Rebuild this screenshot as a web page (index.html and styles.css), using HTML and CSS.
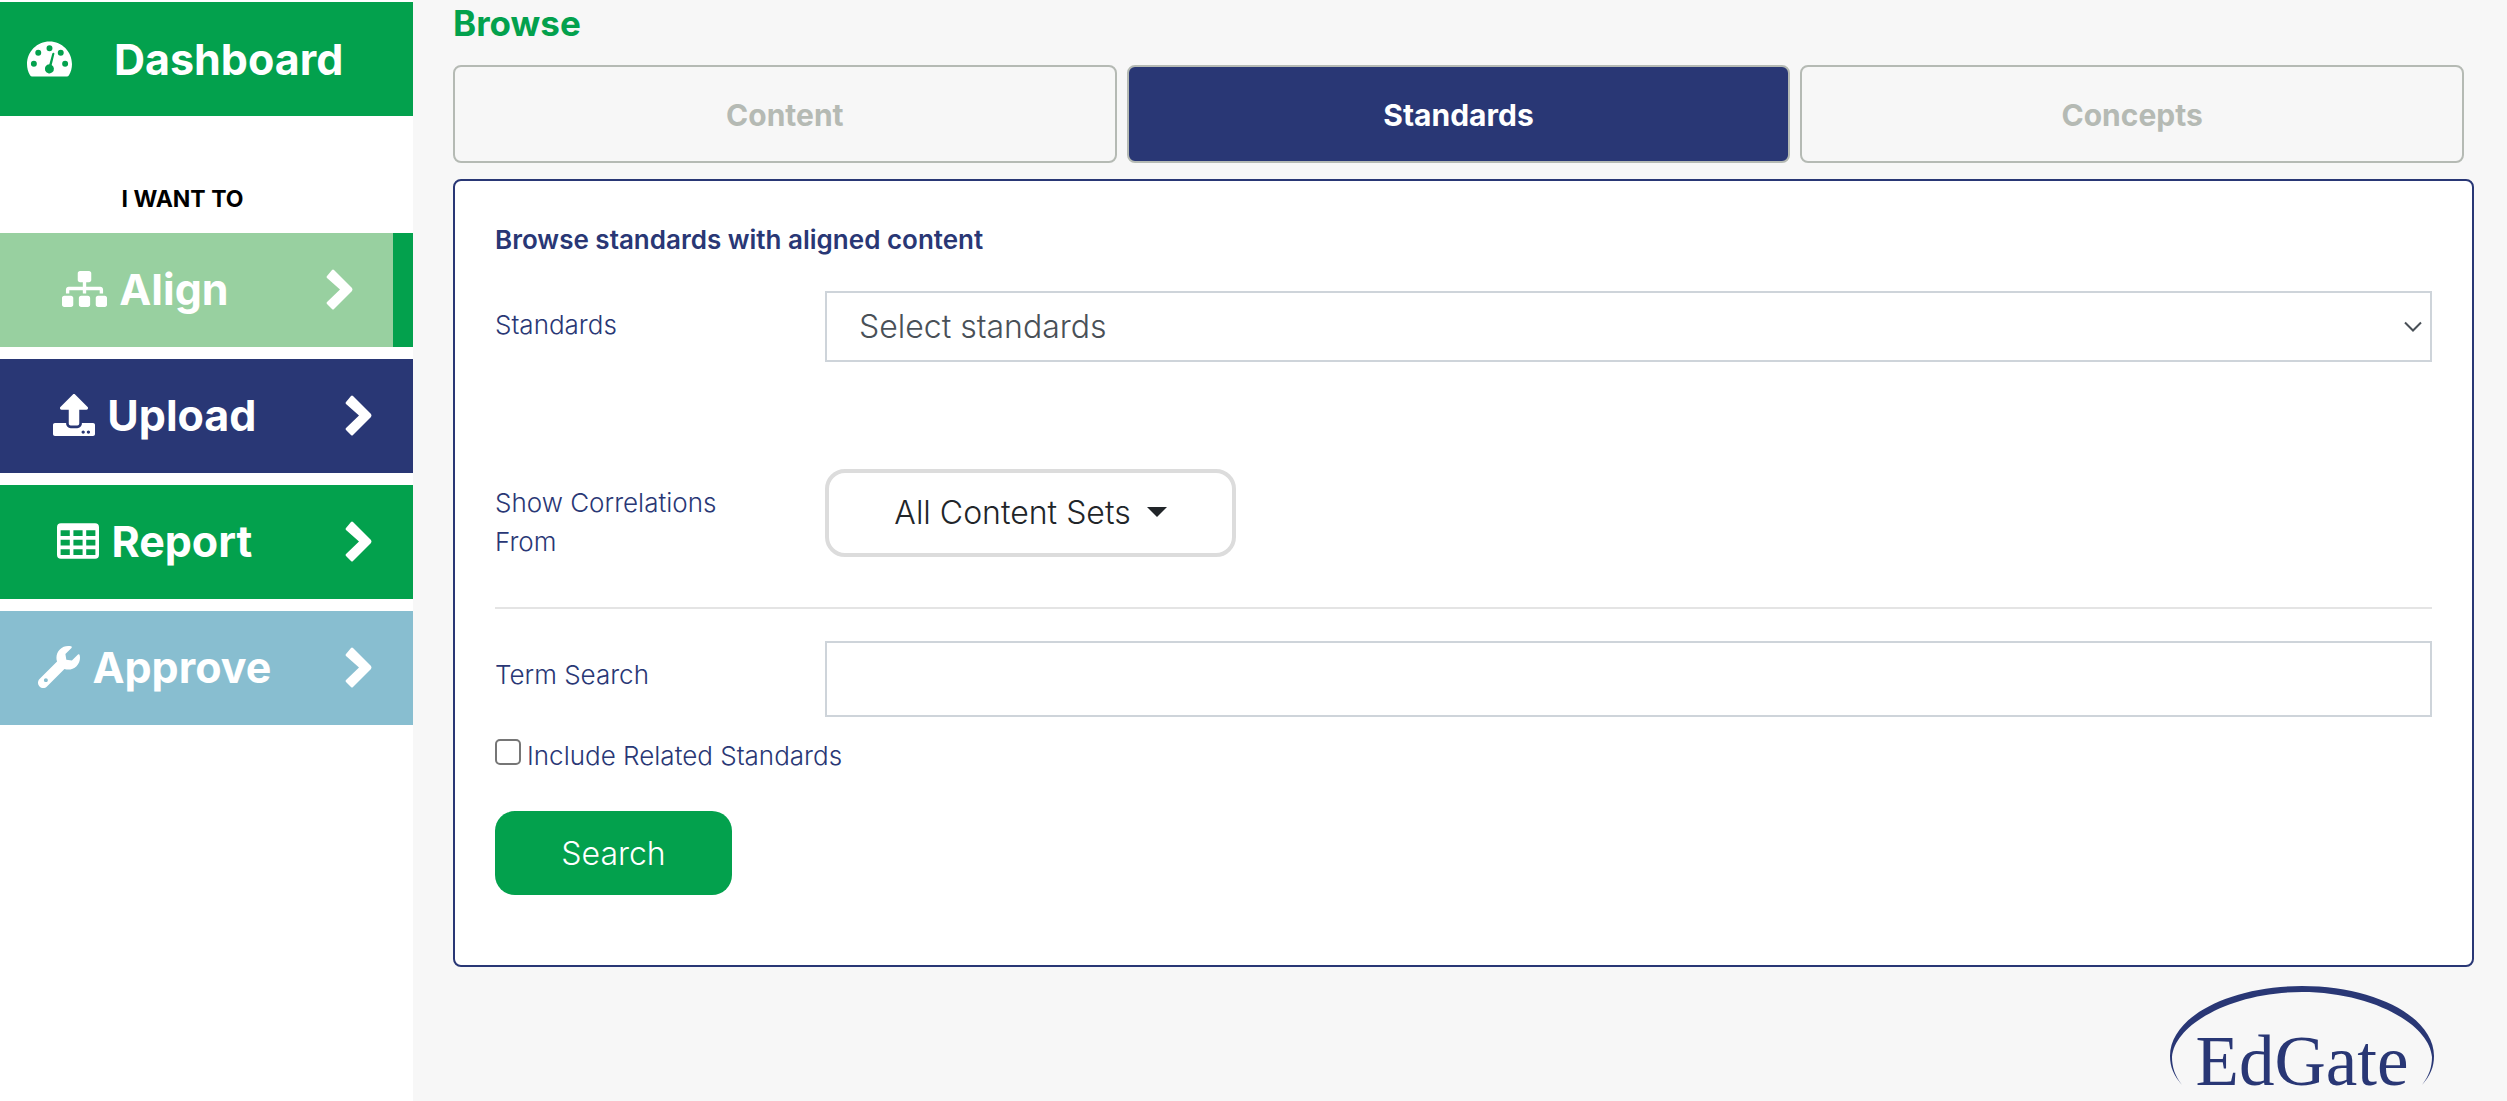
FILE: index.html
```html
<!DOCTYPE html>
<html lang="en">
<head>
<meta charset="utf-8">
<meta name="viewport" content="width=device-width, initial-scale=1">
<title>Browse Standards</title>
<link rel="stylesheet" href="styles.css">
</head>
<body>
<div class="app">
  <nav class="sidebar" aria-label="Main">
    <a class="nav-home" href="#">
      <svg class="icon icon-wide" viewBox="0 0 576 512" aria-hidden="true"><path fill="currentColor" fill-rule="evenodd" d="M288 32C129 32 0 161 0 320c0 53 14 102 39 145 6 10 16 15 27 15h444c11 0 21-5 27-15 25-43 39-92 39-145 0-159-129-288-288-288zM288 80a38 38 0 1 1 0 76 38 38 0 1 1 0-76zM144 138a38 38 0 1 1 0 76 38 38 0 1 1 0-76zM432 138a38 38 0 1 1 0 76 38 38 0 1 1 0-76zM88 278a38 38 0 1 1 0 76 38 38 0 1 1 0-76zM488 278a38 38 0 1 1 0 76 38 38 0 1 1 0-76zM350 192Q354 180 342 176T324 186L286 324A58 58 0 1 0 316 332Z"/></svg>
      <span>Dashboard</span>
    </a>
    <h2 class="nav-heading">I WANT TO</h2>
    <ul class="nav-list">
      <li><a class="nav-item nav-align" href="#">
        <span class="nav-label"><svg class="icon icon-wide" viewBox="0 0 640 512" aria-hidden="true"><path fill="currentColor" d="M128 352H32c-17.670 0-32 14.330-32 32v96c0 17.670 14.330 32 32 32h96c17.670 0 32-14.330 32-32v-96c0-17.670-14.330-32-32-32zm-24-80h192v48h48v-48h192v48h48v-57.590c0-21.170-17.230-38.410-38.410-38.410H344v-64h40c17.670 0 32-14.330 32-32V32c0-17.670-14.330-32-32-32H256c-17.670 0-32 14.330-32 32v96c0 17.670 14.330 32 32 32h40v64H94.410C73.230 224 56 241.230 56 262.410V320h48v-48zm264 80h-96c-17.670 0-32 14.330-32 32v96c0 17.670 14.330 32 32 32h96c17.670 0 32-14.330 32-32v-96c0-17.670-14.330-32-32-32zm240 0h-96c-17.670 0-32 14.330-32 32v96c0 17.670 14.330 32 32 32h96c17.670 0 32-14.330 32-32v-96c0-17.670-14.330-32-32-32z"/></svg>Align</span>
        <svg class="chevron" viewBox="0 0 27 41" aria-hidden="true"><path fill="currentColor" d="M1 7 6 1Q7 0 8 1L26 19Q27 20.500 26 22L8 40Q7 41 6 40L1 35Q0 34 1 33L14 20.500 1 9Q0 8 1 7Z"/></svg>
      </a></li>
      <li><a class="nav-item nav-upload" href="#">
        <span class="nav-label"><svg class="icon" viewBox="0 0 512 512" aria-hidden="true"><path fill="currentColor" d="M296 384h-80c-13.300 0-24-10.700-24-24V192h-87.700c-17.800 0-26.700-21.500-14.100-34.100L242.300 5.700c7.500-7.500 19.800-7.500 27.300 0l152.200 152.200c12.600 12.600 3.700 34.100-14.100 34.100H320v168c0 13.300-10.700 24-24 24zm216-8v112c0 13.300-10.700 24-24 24H24c-13.300 0-24-10.700-24-24V376c0-13.300 10.700-24 24-24h136v8c0 30.900 25.100 56 56 56h80c30.900 0 56-25.100 56-56v-8h136c13.300 0 24 10.700 24 24zm-124 88c0-11-9-20-20-20s-20 9-20 20 9 20 20 20 20-9 20-20zm64 0c0-11-9-20-20-20s-20 9-20 20 9 20 20 20 20-9 20-20z"/></svg>Upload</span>
        <svg class="chevron" viewBox="0 0 27 41" aria-hidden="true"><path fill="currentColor" d="M1 7 6 1Q7 0 8 1L26 19Q27 20.500 26 22L8 40Q7 41 6 40L1 35Q0 34 1 33L14 20.500 1 9Q0 8 1 7Z"/></svg>
      </a></li>
      <li><a class="nav-item nav-report" href="#">
        <span class="nav-label"><svg class="icon" viewBox="0 0 512 512" aria-hidden="true"><path fill="currentColor" fill-rule="evenodd" d="M48 40H464Q512 40 512 88V424Q512 472 464 472H48Q0 472 0 424V88Q0 40 48 40ZM44 126V196H156V126ZM200 126V196H312V126ZM356 126V196H468V126ZM44 242V312H156V242ZM200 242V312H312V242ZM356 242V312H468V242ZM44 358V428H156V358ZM200 358V428H312V358ZM356 358V428H468V358Z"/></svg>Report</span>
        <svg class="chevron" viewBox="0 0 27 41" aria-hidden="true"><path fill="currentColor" d="M1 7 6 1Q7 0 8 1L26 19Q27 20.500 26 22L8 40Q7 41 6 40L1 35Q0 34 1 33L14 20.500 1 9Q0 8 1 7Z"/></svg>
      </a></li>
      <li><a class="nav-item nav-approve" href="#">
        <span class="nav-label"><svg class="icon" viewBox="0 0 512 512" aria-hidden="true"><path fill="currentColor" d="M507.730 109.100c-2.240-9.030-13.540-12.090-20.120-5.510l-74.360 74.360-67.880-11.310-11.310-67.880 74.360-74.360c6.620-6.620 3.430-17.900-5.660-20.160-47.380-11.740-99.550.910-136.580 37.930-39.640 39.640-50.550 97.100-34.050 147.200L18.740 402.760c-24.990 24.990-24.990 65.510 0 90.500 24.990 24.990 65.510 24.990 90.500 0l213.210-213.210c50.120 16.710 107.470 5.680 147.370-34.220 37.070-37.070 49.700-89.320 37.910-136.730zM96 440c-13.250 0-24-10.750-24-24 0-13.260 10.750-24 24-24s24 10.740 24 24c0 13.250-10.750 24-24 24z"/></svg>Approve</span>
        <svg class="chevron" viewBox="0 0 27 41" aria-hidden="true"><path fill="currentColor" d="M1 7 6 1Q7 0 8 1L26 19Q27 20.500 26 22L8 40Q7 41 6 40L1 35Q0 34 1 33L14 20.500 1 9Q0 8 1 7Z"/></svg>
      </a></li>
    </ul>
  </nav>

  <main class="main">
    <h1 class="page-title">Browse</h1>
    <div class="tabs" role="tablist">
      <button class="tab" type="button" role="tab" aria-selected="false">Content</button>
      <button class="tab tab-active" type="button" role="tab" aria-selected="true">Standards</button>
      <button class="tab" type="button" role="tab" aria-selected="false">Concepts</button>
    </div>

    <form class="panel">
      <h2 class="panel-title">Browse standards with aligned content</h2>
      <div class="row">
        <label class="row-label" for="standards">Standards</label>
        <div class="select-wrap">
          <select class="field select" id="standards"><option>Select standards</option></select>
          <svg class="select-arrow" viewBox="0 0 18 11" aria-hidden="true"><path d="M1 1.500 9 9.500 17 1.500" fill="none" stroke="currentColor" stroke-width="2"/></svg>
        </div>
      </div>
      <div class="row row-sets">
        <label class="row-label" for="sets">Show Correlations From</label>
        <button class="sets-button" id="sets" type="button">All Content Sets<span class="caret"></span></button>
      </div>
      <hr class="divider">
      <div class="row">
        <label class="row-label" for="term">Term Search</label>
        <input class="field term" id="term" type="text">
      </div>
      <div class="check-row">
        <input class="check" id="related" type="checkbox">
        <label for="related">Include Related Standards</label>
      </div>
      <button class="search-button" type="submit">Search</button>
    </form>

    <footer class="footer">
      <div class="logo">
        <svg class="logo-arc" viewBox="0 0 264 100" aria-hidden="true"><path fill="currentColor" d="M12 99C4 90 0 81 0 70C0 31 59 0 132 0S264 31 264 70C264 81 260 90 252 99C259 90 262 81 262 71C259 37 200 6 132 6S5 37 2 71C2 81 5 90 12 99Z"/></svg>
        <span class="logo-text">EdGate</span>
      </div>
    </footer>
  </main>
</div>
</body>
</html>
```
FILE: styles.css
```css
:root {
  --green: #03a14d;
  --navy: #293775;
  --grey: #b5bab4;
  --line: #ced4da;
}

* { box-sizing: border-box; }

body {
  margin: 0;
  background: #f7f7f7;
  color: var(--navy);
  font-family: Inter, "Liberation Sans", sans-serif;
  font-size: 26px;
  font-weight: 300;
  line-height: 39px;
}

button, input, select { font: inherit; }

.app {
  display: flex;
  min-height: 100vh;
}

/* Sidebar */
.sidebar {
  flex: 0 0 413px;
  padding-top: 2px;
  background: #fff;
}

.nav-home, .nav-item {
  display: flex;
  align-items: center;
  height: 114px;
  color: #fff;
  font-size: 43px;
  font-weight: 700;
  text-decoration: none;
}

.nav-item { padding-bottom: 2px; }

.nav-home {
  gap: 42px;
  padding-left: 27px;
  background: var(--green);
}

.nav-heading {
  margin: 0;
  padding: 64px 48px 14px 0;
  color: #000;
  font-size: 23px;
  font-weight: 700;
  text-align: center;
}

.nav-list {
  display: grid;
  gap: 12px;
  margin: 0;
  padding: 0;
  list-style: none;
}

.nav-label {
  flex: 0 0 75%;
  display: flex;
  align-items: center;
  justify-content: center;
  gap: 12px;
}

.nav-align { background: #98d0a0; border-right: 20px solid var(--green); }
.nav-align .nav-label { flex-basis: 74%; }
.nav-upload { background: var(--navy); }
.nav-report { background: var(--green); }
.nav-approve { background: #88bed0; }

.icon { width: 42px; height: 42px; }
.icon-wide { width: 45px; height: 40px; }

.chevron {
  width: 27px;
  height: 41px;
  margin-left: 35px;
}

/* Main column */
.main {
  flex: 1;
  display: flex;
  flex-direction: column;
  min-width: 0;
  padding: 4px 33px 14px 40px;
}

.page-title {
  margin: 0;
  color: var(--green);
  font-size: 35px;
  font-weight: 700;
  line-height: 39px;
}

.tabs {
  display: grid;
  grid-template-columns: repeat(3, 1fr);
  gap: 10px;
  margin: 22px 10px 16px 0;
}

.tab {
  height: 98px;
  padding-top: 3px;
  border: 2px solid var(--grey);
  border-radius: 8px;
  background: transparent;
  color: var(--grey);
  font-size: 30px;
  font-weight: 700;
}

.tab-active { background: var(--navy); color: #fff; }

.panel {
  padding: 39px 40px 70px;
  border: 2px solid var(--navy);
  border-radius: 8px;
  background: #fff;
}

.panel-title {
  margin: 0 0 32px;
  font-size: 26px;
  font-weight: 600;
}

.row {
  display: grid;
  grid-template-columns: 260px 1fr;
  column-gap: 70px;
  align-items: start;
}

.row-label { padding-top: 14px; }

.field {
  display: block;
  width: 100%;
  margin: 0;
  padding: 0 32px;
  border: 2px solid var(--line);
  border-radius: 0;
  background: #fff;
  color: #495057;
  font-size: 32px;
}

.select-wrap { position: relative; }
.select { height: 71px; appearance: none; }

.select-arrow {
  position: absolute;
  top: 30px;
  right: 10px;
  width: 18px;
  height: 11px;
  color: #495057;
  pointer-events: none;
}

.row-sets { margin-top: 107px; }

.sets-button {
  display: flex;
  align-items: center;
  justify-content: center;
  gap: 16px;
  width: 411px;
  height: 88px;
  padding: 0 0 2px;
  border: 4px solid #dcdcdc;
  border-radius: 20px;
  background: #fff;
  color: #212529;
  font-size: 32px;
}

.caret {
  border: 10px solid transparent;
  border-top-color: currentColor;
  border-bottom: 0;
}

.divider {
  height: 2px;
  margin: 46px 0 32px;
  border: 0;
  background: #e4e4e4;
}

.term { height: 76px; }

.check-row {
  display: flex;
  gap: 6px;
  margin-top: 19px;
}

.check {
  appearance: none;
  width: 26px;
  height: 26px;
  margin: 3px 0 0;
  border: 2px solid #767676;
  border-radius: 5px;
  background: #fff;
}

.check:checked { background: var(--navy); }

.search-button {
  display: block;
  width: 237px;
  height: 84px;
  margin-top: 36px;
  border: 0;
  border-radius: 20px;
  background: var(--green);
  color: #fff;
  font-size: 32px;
}

/* Footer logo */
.footer {
  display: flex;
  justify-content: flex-end;
  padding: 19px 40px 0 0;
}

.logo {
  position: relative;
  width: 264px;
}

.logo-arc { display: block; width: 100%; }

.logo-text {
  position: absolute;
  right: 0;
  bottom: -10px;
  left: 0;
  font-family: "Liberation Serif", serif;
  font-size: 71px;
  font-weight: 400;
  line-height: 70px;
  text-align: center;
}
```
